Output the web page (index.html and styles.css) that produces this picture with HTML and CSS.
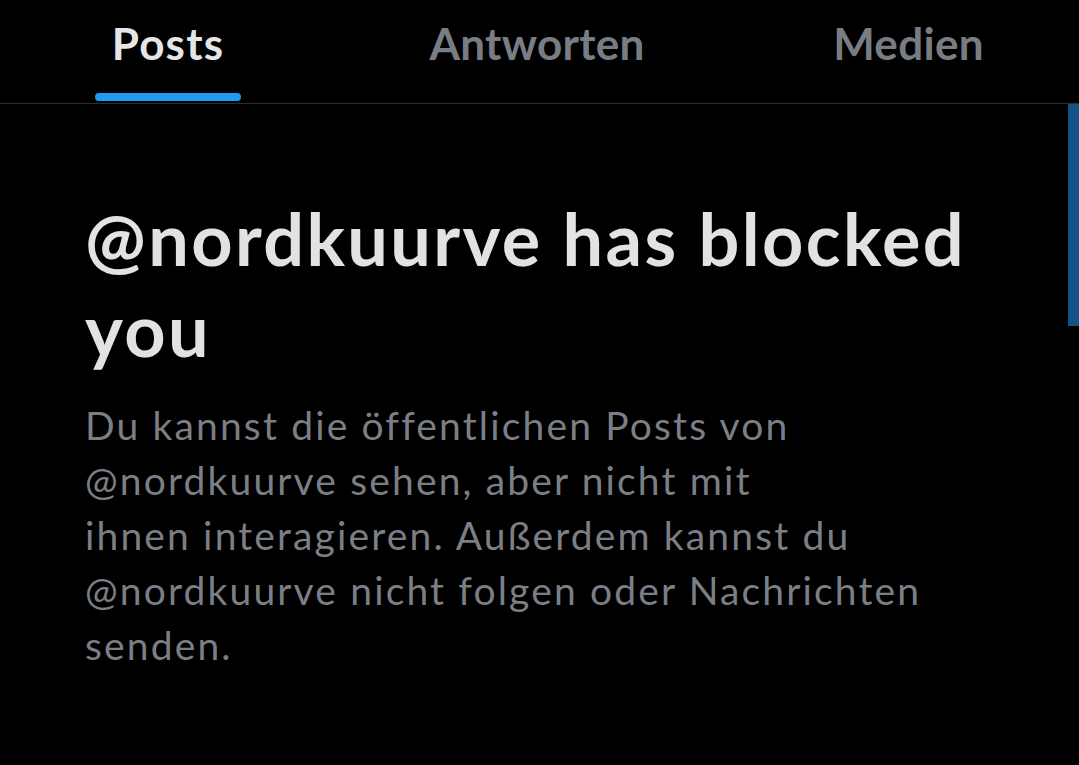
FILE: index.html
```html
<!DOCTYPE html>
<html lang="de">
<head>
<meta charset="utf-8">
<title>@nordkuurve</title>
<link rel="stylesheet" href="styles.css">
</head>
<body>
<div class="screen">
  <nav class="tabs">
    <div class="tab tab-active">
      <span class="tab-label">Posts</span>
      <span class="tab-indicator"></span>
    </div>
    <div class="tab">
      <span class="tab-label">Antworten</span>
    </div>
    <div class="tab">
      <span class="tab-label">Medien</span>
    </div>
  </nav>
  <main class="content">
    <h1 class="blocked-title">@nordkuurve has blocked you</h1>
    <p class="blocked-text">Du kannst die öffentlichen Posts von<br>@nordkuurve sehen, aber nicht mit<br>ihnen interagieren. Außerdem kannst du<br>@nordkuurve nicht folgen oder Nachrichten<br>senden.</p>
    <div class="scroll-thumb"></div>
  </main>
</div>
</body>
</html>
```
FILE: styles.css
```css
html, body {
  margin: 0;
  padding: 0;
  background: #000;
}
body {
  font-family: Lato, "Liberation Sans", sans-serif;
}
.screen {
  width: 1079px;
  height: 765px;
  overflow: hidden;
  background: #000;
}
.tabs {
  display: grid;
  grid-template-columns: 336px 402px 341px;
  height: 103px;
  border-bottom: 1px solid #2c2f32;
}
.tab {
  display: flex;
  flex-direction: column;
  align-items: center;
}
.tab-label {
  margin-top: 17px;
  font-size: 44px;
  line-height: 53px;
  font-weight: 700;
  letter-spacing: 0.3px;
  color: #787d83;
}
.tab-active .tab-label {
  color: #e4e5e6;
  letter-spacing: 1.2px;
}
.tab-indicator {
  margin-top: 23px;
  width: 146px;
  height: 8px;
  border-radius: 4px;
  background: #1d9bf0;
}
.content {
  position: relative;
  padding: 89px 100px 0 85px;
  height: 661px;
}
.blocked-title {
  margin: 0;
  font-size: 72px;
  line-height: 91px;
  font-weight: 700;
  letter-spacing: 2.4px;
  color: #e1e2e3;
}
.blocked-text {
  margin: 23px 0 0;
  font-size: 39px;
  line-height: 55px;
  font-weight: 400;
  letter-spacing: 2.15px;
  color: #7b7f85;
}
.scroll-thumb {
  position: absolute;
  top: 0;
  right: 0;
  width: 11px;
  height: 222px;
  background: #115386;
}
```
